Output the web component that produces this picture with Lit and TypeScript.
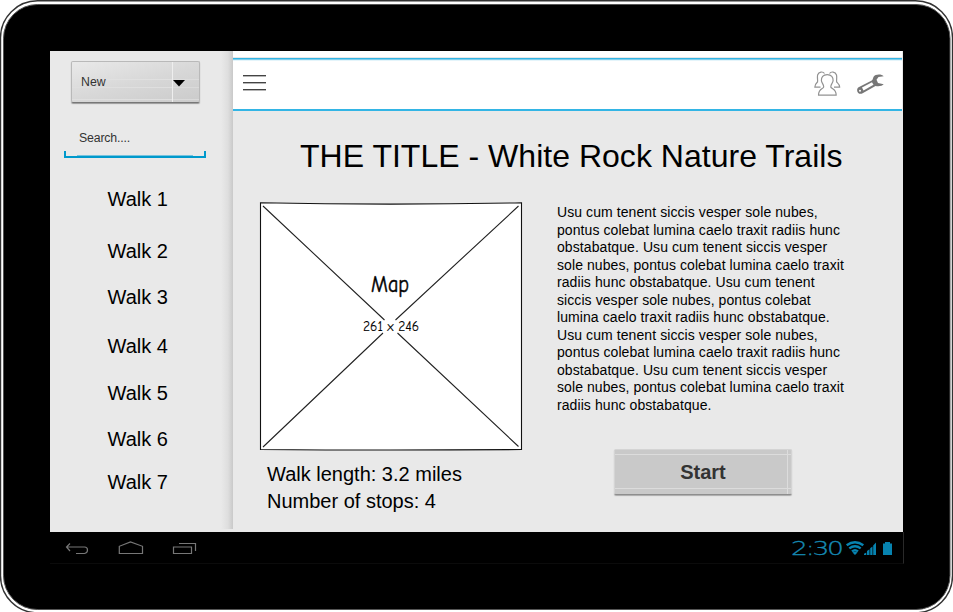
import { LitElement, html, css } from "lit";
import { customElement } from "lit/decorators.js";

const LINES = [
  "Usu cum tenent siccis vesper sole nubes,",
  "pontus colebat lumina caelo traxit radiis hunc",
  "obstabatque. Usu cum tenent siccis vesper",
  "sole nubes, pontus colebat lumina caelo traxit",
  "radiis hunc obstabatque. Usu cum tenent",
  "siccis vesper sole nubes, pontus colebat",
  "lumina caelo traxit radiis hunc obstabatque.",
  "Usu cum tenent siccis vesper sole nubes,",
  "pontus colebat lumina caelo traxit radiis hunc",
  "obstabatque. Usu cum tenent siccis vesper",
  "sole nubes, pontus colebat lumina caelo traxit",
  "radiis hunc obstabatque.",
];

@customElement("walk-sidebar")
class WalkSidebar extends LitElement {
  static styles = css`
    :host { display: block; width: 183px; height: 478px; box-sizing: border-box; padding-top: 10px;
      background: linear-gradient(90deg, transparent 171px, #dedede 178px, #c9c9c9 183px); }
    .new { display: flex; width: 129px; height: 42px; margin-left: 21px; box-sizing: border-box;
      border: 1px solid #b9b9b9; border-bottom: 1px solid #777; border-radius: 2px;
      background: linear-gradient(165deg, #e9e9e9, #d8d8d8 50%, #cbcbcb);
      box-shadow: 0 1px 1px #999; font-size: 12.3px; color: #333; }
    .label { width: 101px; box-sizing: border-box; padding: 12px 0 0 9px; line-height: 16px;
      border-right: 1px solid #eee;
      background: linear-gradient(#e0e0e0, #e0e0e0) 0 17px / 100% 1px no-repeat,
        linear-gradient(#dfdfdf, #dfdfdf) 0 25px / 100% 1px no-repeat,
        linear-gradient(#dfdfdf, #dfdfdf) 0 37px / 100% 1px no-repeat; }
    .arrow { flex: 1; background: linear-gradient(#dcdcdc, #dcdcdc) 0 17px / 100% 1px no-repeat,
        linear-gradient(#dadada, #dadada) 0 25px / 100% 1px no-repeat,
        linear-gradient(#dadada, #dadada) 0 37px / 100% 1px no-repeat; }
    .arrow svg { display: block; margin: 18px 0 0 0; }
    .search { width: 142px; height: 30px; margin: 26px 0 0 14px; }
    .hint { padding: 0 0 0 15px; line-height: 19px; font-size: 12.3px; color: #333; letter-spacing: -.15px; }
    .search svg { display: block; margin-top: 3px; }
    .list { display: grid; grid-template-rows: 52px 46px 49px 47px 46px 43px 40px; margin-top: 16px; }
    .walk { padding-left: 57.5px; font-size: 20px; line-height: 48px; height: 40px; color: #000; }
  `;
  render() {
    return html`
      <div class="new"><div class="label">New</div><div class="arrow">
        <svg width="12" height="7"><path d="M0 0H12L6 6.5Z"/></svg></div></div>
      <div class="search"><div class="hint">Search....</div>
        <svg width="142" height="7" shape-rendering="crispEdges"><path d="M1 0V6H141V0" fill="none" stroke="#0099cc" stroke-width="2"/><path d="M13 4.5H129" stroke="#76c3de"/></svg></div>
      <div class="list">${[1, 2, 3, 4, 5, 6, 7].map((n) => html`<div class="walk">Walk ${n}</div>`)}</div>`;
  }
}

@customElement("top-bar")
class TopBar extends LitElement {
  static styles = css`
    :host { display: flex; box-sizing: border-box; width: 669px; height: 60px; background: #fff;
      border-bottom: 2px solid #33b5e5; padding-top: 6px; }
    .inner { display: flex; flex: 1; border-top: 1px solid #e8e8e8; box-shadow: inset 0 1px #33b5e5, inset 0 2px #7fcfec, inset 0 3px #e4f4fa; }
    .menu { margin: 17px 0 0 10px; }
    .people { margin: 13px 0 0 548px; }
    .wrench { margin: 14px 0 0 15px; }
    svg { display: block; flex: none; }
  `;
  render() {
    return html`<div class="inner">
      <svg class="menu" width="23" height="17" shape-rendering="crispEdges"><path d="M0 .5H23M0 7.5H23M0 14.5H23" stroke="#444"/><path d="M0 1.5H23M0 8.5H23M0 15.5H23" stroke="#b5b5b5"/></svg>
      <svg class="people" width="28" height="26" viewBox="0 0 28 26" fill="none" stroke="#929292" stroke-width="1.2" stroke-linejoin="round">
        <path d="M10.500 2.500C9 .300 4.800.300 3.600 4C3 7 4 9 3.500 11C2 12.500.8 13.500.8 16.200H6.500"/>
        <path d="M15.500 2.500C17 .300 21.300.300 22.500 4C23.200 7 22.200 9 22.700 11C24.200 12.500 25.700 13.500 25.700 16.200H20"/>
        <path d="M13.200 3.600C9 3.600 7.200 6.200 7.400 9.500C7.500 12.200 10 13.400 9.700 16C9.300 17.900 4.500 17.500 4.500 24.200H22.200C22.200 17.500 17.300 17.900 16.800 16C16.500 13.400 19 12.200 19.100 9.500C19.300 6.200 17.400 3.600 13.200 3.600Z"/></svg>
      <svg class="wrench" width="28" height="24" viewBox="0 0 28 24">
        <path d="M14.800 8.500L1.600 15.300C-.3 16.600-.3 19.500 1.200 21C2.500 22.200 4.400 22 5.600 21.300L18.500 13.900C21.500 14.900 25.300 14 26.700 12.300L21 11L19.500 7.800L21.500 5L26.700 4.200C24.500 1.600 18 2 16.600 4.800C15.900 6.300 16 7.500 14.800 8.500Z" fill="#777"/>
        <path d="M5 15.400L15 10.200L16.500 12.700L6.500 18.500Z" fill="#fff"/><circle cx="3" cy="18.700" r="1" fill="#fff"/></svg></div>`;
  }
}

@customElement("walk-details")
class WalkDetails extends LitElement {
  static styles = css`
    :host { display: block; width: 670px; height: 418px; }
    .title { padding-left: 67px; padding-top: 24px; font-size: 32px; line-height: 42px; white-space: nowrap; letter-spacing: .02px; }
    .columns { display: flex; padding-top: 24px; }
    .left { width: 324px; box-sizing: border-box; padding-left: 26px; }
    .map { display: block; }
    .comic { font-family: "Comic Sans MS", "Comic Neue", "Open Sans", sans-serif; stroke: #000; }
    .facts { padding: 10px 0 0 8px; font-size: 20px; line-height: 27px; white-space: nowrap; }
    .copy { padding-top: 3px; font-size: 14px; line-height: 17.55px; white-space: nowrap; letter-spacing: .08px; }
    .start { display: flex; align-items: center; justify-content: center; box-sizing: border-box; width: 178px; height: 46px;
      padding-top: 1px; margin: 34.400px 0 0 57px; font-weight: bold; font-size: 20px; color: #333;
      border: 1px solid #d4d4d4; border-bottom: 1px solid #8e8e8e; border-radius: 2px; box-shadow: 0 1px 1px #aaa;
      background: linear-gradient(#dcdcdc, #dcdcdc) 0 4px / 100% 1px no-repeat,
        linear-gradient(#dcdcdc, #dcdcdc) 0 38px / 100% 1px no-repeat,
        linear-gradient(#dcdcdc, #dcdcdc) 172px 0 / 1px 100% no-repeat, #c9c9c9; }
  `;
  render() {
    return html`
      <div class="title">THE TITLE - White Rock Nature Trails</div>
      <div class="columns">
        <div class="left">
          <svg class="map" width="264" height="250" viewBox="0 0 264 250">
            <path d="M1.500 1.800Q131 4.400 262.500 1.800V248.500Q131 249.500 1.500 248.500Z" fill="#fff" stroke="#111" stroke-width="1.100"/>
            <path d="M4 5L125.500 119M259.500 5L136.500 119M4 246L124 132M138.500 132L259.500 245.500" stroke="#222" stroke-width="1.100"/>
            <text class="comic" x="112" y="90.500" font-size="23.500" stroke-width=".5" textLength="38" lengthAdjust="spacingAndGlyphs">Map</text>
            <text class="comic" x="104" y="130" font-size="13.500" stroke-width=".1" textLength="56" lengthAdjust="spacingAndGlyphs">261 x 246</text>
          </svg>
          <div class="facts">Walk length: 3.2 miles<br>Number of stops: 4</div>
        </div>
        <div>
          <div class="copy">${LINES.map((l) => html`<div>${l}</div>`)}</div>
          <div class="start">Start</div>
        </div>
      </div>`;
  }
}

@customElement("system-bar")
class SystemBar extends LitElement {
  static styles = css`
    :host { display: flex; justify-content: space-between; box-sizing: border-box; height: 32px; background: #000;
      border-right: 1px solid #292929; border-bottom: 1px solid #0b0b0b; }
    svg { display: block; }
    .clock { font-family: "DejaVu Sans"; font-weight: 200; font-size: 19px; letter-spacing: -1.6px; fill: #168bb5; stroke: #168bb5; stroke-width: .3; }
  `;
  render() {
    return html`
      <svg width="160" height="30" fill="none" stroke="#777" stroke-width="1.200">
        <path d="M20 11.500L16.500 15L20 19M17 15H34.500Q37.500 15 37.500 18T34.500 21.500H26"/>
        <path d="M69.300 21.500V14.300L80.500 10L92.500 14.300V21.500Z"/>
        <path d="M123.500 15H141.500V21.500H123.500ZM129 11.500H145.500V19"/></svg>
      <svg width="118" height="30">
        <text class="clock" transform="translate(6 23) scale(1.400 1)">2:30</text>
        <g fill="none" stroke="#0783b0" stroke-width="2.400"><path d="M61.700 13.300Q70 7 78.300 13.300M64.300 16.400Q70 12 75.700 16.400M67 19.400Q70 17 73 19.400"/></g>
        <path d="M67.500 20.500L70 23L72.500 20.500Q70 18.800 67.500 20.500ZM79 23V21.700L81.300 20.500V23ZM82 23V19L84.500 17.200V23ZM85.200 23V16.300L87.500 14.500V23ZM88.200 23V13.500L91 10.500V23Z" fill="#0783b0"/>
        <path d="M98 11.500H100V10H105V11.500H107V23H98Z" fill="#0783b0"/></svg>`;
  }
}

@customElement("app-root")
class AppRoot extends LitElement {
  static styles = css`
    :host { display: block; position: relative; width: 953px; height: 612px; overflow: hidden; background: #fff;
      font-family: "Liberation Sans", Arial, sans-serif; color: #000; }
    .frame { position: absolute; inset: 0; }
    .device { position: relative; padding: 51px 49px 0 50px; }
    .screen { display: flex; width: 853px; height: 481px; background: #e9e9e9; }
    .main { width: 670px; }
    system-bar { width: 854px; }
  `;
  render() {
    return html`
      <svg class="frame" width="953" height="612">
        <rect x=".5" y=".8" width="952" height="612" rx="37" fill="#fff" stroke="#333" stroke-width="1.400"/>
        <rect x="3.500" y="4.500" width="946.500" height="605" rx="34" fill="#000" stroke="#555" stroke-width="1"/>
      </svg>
      <div class="device">
        <div class="screen"><walk-sidebar></walk-sidebar>
          <div class="main"><top-bar></top-bar><walk-details></walk-details></div></div>
        <system-bar></system-bar>
      </div>`;
  }
}
